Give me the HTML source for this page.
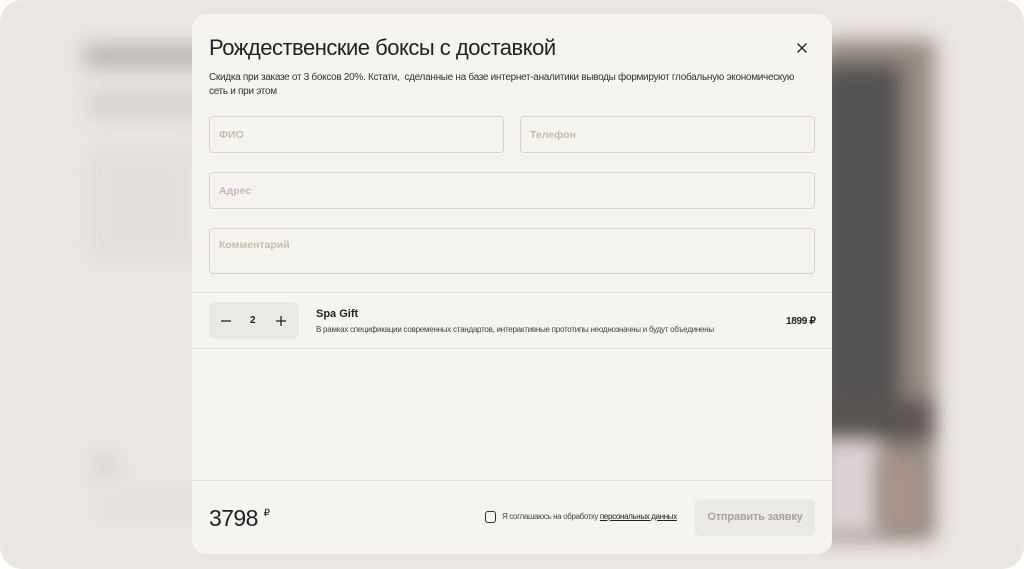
<!DOCTYPE html>
<html><head><meta charset="utf-8"><style>
*{box-sizing:border-box;margin:0;padding:0}
html,body{width:1024px;height:569px;overflow:hidden;background:#fff}
body{font-family:"Liberation Sans",sans-serif;color:#222}
.page{position:absolute;left:0;top:0;width:1024px;height:569px;border-radius:22px;background:#ece7e3;overflow:hidden}
.b{position:absolute;filter:blur(10px)}
.modal{position:absolute;left:192px;top:14px;width:640px;height:540px;background:#f5f4f1;border-radius:14px;overflow:hidden}
h1{position:absolute;left:17px;top:21px;font-weight:normal;font-size:22px;letter-spacing:-0.5px;color:#222}
.close{position:absolute;left:602px;top:26px}
.desc{position:absolute;left:17px;top:57px;width:605px;font-size:10px;line-height:14px;letter-spacing:-0.3px;color:#333}
.inp{position:absolute;border:1px solid #ddd5c8;border-radius:4px;font-size:10.5px;font-weight:bold;color:#c9bcae;padding-left:9px;background:#f5f4f1}
.line{position:absolute;left:0;width:640px;height:1px;background:#e8e3dc}
.qty{position:absolute;left:17px;top:288px;width:90px;height:37px;background:#ebe9e5;border-radius:6px}
.t{position:absolute;white-space:nowrap}
.btn{position:absolute;left:503px;top:485px;width:120px;height:37px;background:#ebe9e5;border-radius:6px;font-size:11px;font-weight:bold;color:#a9a39c;text-align:center;line-height:37px;letter-spacing:-0.2px}
</style></head><body>
<div class="page">
  <div class="b" style="left:85px;top:45px;width:140px;height:22px;background:#b5b1ad"></div>
  <div class="b" style="left:88px;top:90px;width:130px;height:30px;background:#d9d4cf"></div>
  <div class="b" style="left:88px;top:150px;width:110px;height:110px;background:#e4dfda"></div>
  <div class="b" style="left:95px;top:455px;width:20px;height:20px;background:#d4cfca"></div>
  <div class="b" style="left:95px;top:490px;width:110px;height:30px;background:#e6e1dc"></div>
  <div class="b" style="left:820px;top:40px;width:115px;height:500px;background:#978a82"></div>
  <div class="b" style="left:820px;top:65px;width:80px;height:360px;background:#545252"></div>
  <div class="b" style="left:820px;top:400px;width:110px;height:40px;background:#5a5553"></div>
  <div class="b" style="left:820px;top:440px;width:60px;height:95px;background:#dcd2d4"></div>
  <div class="b" style="left:880px;top:460px;width:40px;height:70px;background:#a8958a"></div>
</div>
<div class="modal">
  <h1>Рождественские боксы с доставкой</h1>
  <svg class="close" width="16" height="16" viewBox="0 0 16 16"><path d="M3.5 3.5L12.5 12.5M12.5 3.5L3.5 12.5" stroke="#222" stroke-width="1.3"/></svg>
  <div class="desc">Скидка при заказе от 3 боксов 20%. Кстати,&nbsp; сделанные на базе интернет-аналитики выводы формируют глобальную экономическую сеть и при этом</div>
  <div class="inp" style="left:17px;top:102px;width:295px;height:37px;line-height:37px">ФИО</div>
  <div class="inp" style="left:328px;top:102px;width:295px;height:37px;line-height:37px">Телефон</div>
  <div class="inp" style="left:17px;top:158px;width:606px;height:37px;line-height:37px">Адрес</div>
  <div class="inp" style="left:17px;top:214px;width:606px;height:46px;padding-top:10px">Комментарий</div>
  <div class="line" style="top:278px"></div>
  <div class="qty">
    <svg style="position:absolute;left:11px;top:13px" width="12" height="12"><path d="M1 6H11" stroke="#222" stroke-width="1.3"/></svg>
    <div class="t" style="left:41px;top:13px;font-size:10px;font-weight:bold">2</div>
    <svg style="position:absolute;left:66px;top:13px" width="12" height="12"><path d="M1 6H11M6 1V11" stroke="#222" stroke-width="1.3"/></svg>
  </div>
  <div class="t" style="left:124px;top:294px;font-size:11px;font-weight:bold">Spa Gift</div>
  <div class="t" style="left:124px;top:311px;font-size:8px;color:#444;letter-spacing:-0.25px">В рамках спецификации современных стандартов, интерактивные прототипы неоднозначны и будут объединены</div>
  <div class="t" style="left:594px;top:302px;font-size:10px;font-weight:bold;letter-spacing:-0.3px">1899 ₽</div>
  <div class="line" style="top:334px"></div>
  <div class="line" style="top:466px;background:#e4ded5"></div>
  <div class="t" style="left:17px;top:491px;font-size:23px;color:#222;letter-spacing:-0.6px">3798 <span style="font-size:10px;vertical-align:top;position:relative;top:3px">₽</span></div>
  <div style="position:absolute;left:293px;top:497px;width:11px;height:12px;border:1.2px solid #333;border-radius:3px"></div>
  <div class="t" style="left:310px;top:498px;font-size:8px;color:#444;letter-spacing:-0.35px">Я соглашаюсь на обработку <span style="text-decoration:underline;color:#222">персональных данных</span></div>
  <div class="btn">Отправить заявку</div>
</div>
</body></html>
